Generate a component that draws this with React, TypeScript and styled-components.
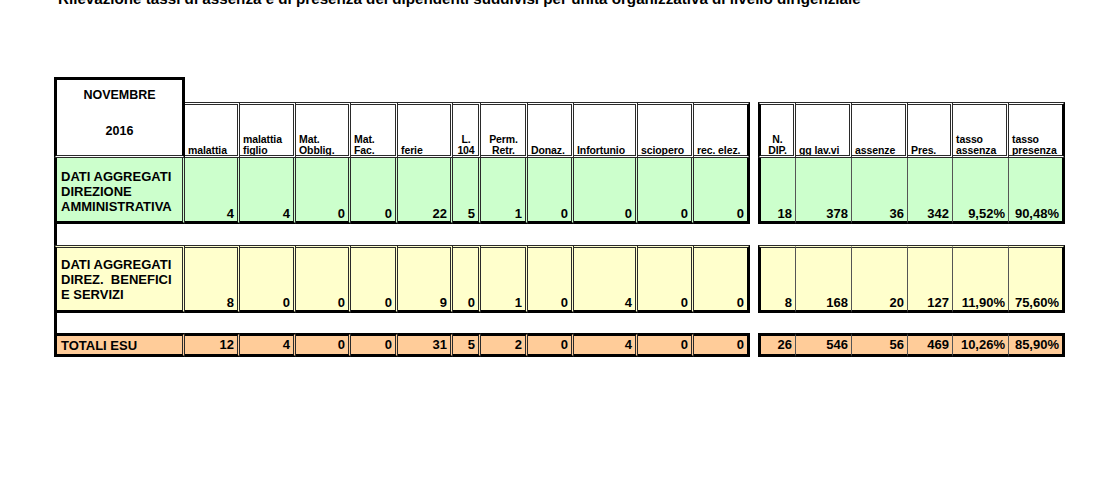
import * as React from 'react';
import styled, { createGlobalStyle } from 'styled-components';

const GlobalStyle = createGlobalStyle`
  html, body {
    margin: 0;
    padding: 0;
    background: #fff;
  }
  body {
    font-family: "Liberation Sans", Arial, sans-serif;
    color: #000;
  }
`;

type Edge = 'thick' | 'double' | 'thin' | 'none';

const edge = (e?: Edge) =>
  e === 'thick'
    ? '3px solid #000'
    : e === 'double'
    ? '3px double #2a2a2a'
    : e === 'thin'
    ? '1px solid #555'
    : 'none';

// column widths of the sheet (px), 12 on the left block, a spacer, 6 on the right
const COLS = [131, 55, 56, 55, 47, 55, 28, 47, 46, 64, 56, 56, 8, 38, 56, 56, 45, 56, 56];

const Page = styled.div`
  padding: 0 0 0 54px;
  overflow: hidden;
`;

const Title = styled.h1`
  margin: -9px 0 0 4px;
  font-size: 15.2px;
  line-height: 16px;
  font-weight: bold;
  white-space: nowrap;
`;

const Sheet = styled.div`
  margin-top: 70px;
  display: grid;
  grid-template-columns: ${COLS.map((c) => `${c}px`).join(' ')};
  grid-template-rows: 25px 56px 66px 21px 68px 20px 24px;
  width: max-content;
`;

const Cell = styled.div<{ $bg?: string; $t?: Edge; $r?: Edge; $b?: Edge; $l?: Edge }>`
  box-sizing: border-box;
  min-width: 0;
  overflow: hidden;
  background: ${(p) => p.$bg ?? 'transparent'};
  border-top: ${(p) => edge(p.$t)};
  border-right: ${(p) => edge(p.$r)};
  border-bottom: ${(p) => edge(p.$b)};
  border-left: ${(p) => edge(p.$l)};
`;

const Filler = styled.div<{ $span: number }>`
  grid-column: span ${(p) => p.$span};
`;

const MonthCell = styled(Cell)`
  grid-row: span 2;
  display: flex;
  flex-direction: column;
  align-items: center;
  padding-top: 8px;
  font-size: 12.5px;
  font-weight: bold;
  line-height: 14px;

  & > span + span {
    margin-top: 22px;
  }
`;

const HeadCell = styled(Cell)<{ $center?: boolean }>`
  display: flex;
  flex-direction: column;
  justify-content: flex-end;
  align-items: ${(p) => (p.$center ? 'center' : 'flex-start')};
  padding: 0 2px 0 3px;
  font-size: 10.5px;
  line-height: 11px;
  font-weight: bold;
  letter-spacing: -0.1px;
  white-space: nowrap;
  background: #fff;

  & > span:last-child {
    margin-bottom: -1px;
  }
`;

const LabelCell = styled(Cell)<{ $pad?: number; $middle?: boolean }>`
  display: flex;
  flex-direction: column;
  justify-content: ${(p) => (p.$middle ? 'center' : 'flex-start')};
  padding: ${(p) => p.$pad ?? 0}px 2px 0 4px;
  font-size: 13px;
  line-height: 15px;
  font-weight: bold;
  white-space: pre;
`;

const NumCell = styled(Cell)<{ $middle?: boolean }>`
  display: flex;
  align-items: ${(p) => (p.$middle ? 'center' : 'flex-end')};
  justify-content: flex-end;
  padding: 0 3px 1px 0;
  font-size: 13px;
  line-height: 13px;
  font-weight: bold;
  white-space: nowrap;
`;

const GapCell = styled(Cell)``;

const HEAD_LEFT: { t: string[]; c?: boolean }[] = [
  { t: ['malattia'] },
  { t: ['malattia', 'figlio'] },
  { t: ['Mat.', 'Obblig.'] },
  { t: ['Mat.', 'Fac.'] },
  { t: ['ferie'] },
  { t: ['L.', '104'], c: true },
  { t: ['Perm.', 'Retr.'], c: true },
  { t: ['Donaz.'] },
  { t: ['Infortunio'] },
  { t: ['sciopero'] },
  { t: ['rec. elez.'] },
];

const HEAD_RIGHT: { t: string[]; c?: boolean }[] = [
  { t: ['N.', 'DIP.'], c: true },
  { t: ['gg lav.vi'] },
  { t: ['assenze'] },
  { t: ['Pres.'] },
  { t: ['tasso', 'assenza'] },
  { t: ['tasso', 'presenza'] },
];

type Row = {
  label: string[];
  bg: string;
  pad: number;
  top: Edge;
  left: string[];
  right: string[];
};

const ROWS: Row[] = [
  {
    label: ['DATI AGGREGATI', 'DIREZIONE', 'AMMINISTRATIVA'],
    bg: '#ccffcc',
    pad: 11,
    top: 'none',
    left: ['4', '4', '0', '0', '22', '5', '1', '0', '0', '0', '0'],
    right: ['18', '378', '36', '342', '9,52%', '90,48%'],
  },
  {
    label: ['DATI AGGREGATI', 'DIREZ.  BENEFICI', 'E SERVIZI'],
    bg: '#ffffcc',
    pad: 9,
    top: 'double',
    left: ['8', '0', '0', '0', '9', '0', '1', '0', '4', '0', '0'],
    right: ['8', '168', '20', '127', '11,90%', '75,60%'],
  },
];

const TOTAL = {
  bg: '#ffcc99',
  left: ['12', '4', '0', '0', '31', '5', '2', '0', '4', '0', '0'],
  right: ['26', '546', '56', '469', '10,26%', '85,90%'],
};

const NumbersRow: React.FC<{
  bg: string;
  top: Edge;
  left: string[];
  right: string[];
  middle?: boolean;
}> = ({ bg, top, left, right, middle }) => (
  <>
    {left.map((v, i) => (
      <NumCell
        key={`l${i}`}
        $middle={middle}
        $bg={bg}
        $t={top}
        $b="thick"
        $r={i === left.length - 1 ? 'thick' : 'double'}
      >
        {v}
      </NumCell>
    ))}
    <div />
    {right.map((v, i) => (
      <NumCell
        key={`r${i}`}
        $middle={middle}
        $bg={bg}
        $t={top}
        $b="thick"
        $l={i === 0 ? 'thick' : 'none'}
        $r={i === right.length - 1 ? 'thick' : 'thin'}
      >
        {v}
      </NumCell>
    ))}
  </>
);

const Gap: React.FC = () => (
  <>
    <GapCell $l="thick" />
    <Filler $span={18} />
  </>
);

export default function App() {
  return (
    <Page>
      <GlobalStyle />
      <Title>
        Rilevazione tassi di assenza e di presenza dei dipendenti suddivisi per unità organizzativa di livello
        dirigenziale
      </Title>
      <Sheet>
        <MonthCell $bg="#fff" $t="thick" $l="thick" $r="thick" $b="double">
          <span>NOVEMBRE</span>
          <span>2016</span>
        </MonthCell>
        <Filler $span={18} />

        {HEAD_LEFT.map((h, i) => (
          <HeadCell
            key={`hl${i}`}
            $center={h.c}
            $t="double"
            $b="double"
            $r={i === HEAD_LEFT.length - 1 ? 'thick' : 'double'}
          >
            {h.t.map((line) => (
              <span key={line}>{line}</span>
            ))}
          </HeadCell>
        ))}
        <div />
        {HEAD_RIGHT.map((h, i) => (
          <HeadCell
            key={`hr${i}`}
            $center={h.c}
            $t="double"
            $b="double"
            $l={i === 0 ? 'thick' : 'none'}
            $r={i === HEAD_RIGHT.length - 1 ? 'thick' : 'double'}
          >
            {h.t.map((line) => (
              <span key={line}>{line}</span>
            ))}
          </HeadCell>
        ))}

        {ROWS.map((row, ri) => (
          <React.Fragment key={ri}>
            <LabelCell $bg={row.bg} $pad={row.pad} $t={row.top} $l="thick" $r="double" $b="thick">
              {row.label.map((line) => (
                <span key={line}>{line}</span>
              ))}
            </LabelCell>
            <NumbersRow bg={row.bg} top={row.top} left={row.left} right={row.right} />
            <Gap />
          </React.Fragment>
        ))}

        <LabelCell $bg={TOTAL.bg} $middle $t="thick" $l="thick" $r="double" $b="thick">
          <span>TOTALI ESU</span>
        </LabelCell>
        <NumbersRow bg={TOTAL.bg} top="thick" left={TOTAL.left} right={TOTAL.right} middle />
      </Sheet>
    </Page>
  );
}
